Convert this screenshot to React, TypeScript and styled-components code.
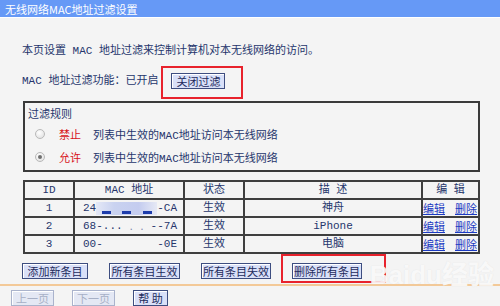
import React from "react";
import styled, { createGlobalStyle } from "styled-components";

const Global = createGlobalStyle`
  html, body { margin: 0; padding: 0; background: #f4f4f4; }
  body { font-family: "Liberation Mono", "Noto Sans CJK SC", monospace; font-size: 11px; color: #26366c; }
`;

const Page = styled.div`
  position: relative;
  width: 500px;
  height: 306px;
  overflow: hidden;
  background: #f4f4f4;
  display: flex;
  flex-direction: column;
`;

const Header = styled.div`
  height: 18px;
  background: #6699f6;
  border-bottom: 1px solid #ffffff;
  color: #ffffff;
  display: flex;
  align-items: center;
  padding-left: 5px;
  font-size: 11px;
  font-family: "Noto Sans CJK SC", sans-serif;
`;

const Content = styled.div`
  display: flex;
  flex-direction: column;
  padding: 25px 20px 0 22px;
`;

const Line = styled.div<{ $mt?: number }>`
  height: 16px;
  line-height: 16px;
  display: flex;
  align-items: center;
  margin-top: ${(p) => p.$mt ?? 0}px;
  white-space: nowrap;
`;

const Btn = styled.button<{ $w: number; $disabled?: boolean }>`
  position: relative;
  width: ${(p) => p.$w}px;
  height: 16px;
  padding: 0;
  font-family: "Noto Sans CJK SC", sans-serif;
  font-size: 11px;
  line-height: 14px;
  background: ${(p) => (p.$disabled ? "#e4e8f4" : "#d9e0f8")};
  color: ${(p) => (p.$disabled ? "#a7b0c6" : "#1e2b5c")};
  border: 1px solid ${(p) => (p.$disabled ? "#aab3cc" : "#3d4d80")};
  border-radius: 0;
  box-shadow: inset 1px 1px 0 #ffffff;
  cursor: default;
`;

const Mark = styled.div<{ $l: number; $t: number; $r: number; $b: number }>`
  position: absolute;
  left: ${(p) => p.$l}px;
  top: ${(p) => p.$t}px;
  right: ${(p) => p.$r}px;
  bottom: ${(p) => p.$b}px;
  border: 2px solid #e8222c;
  pointer-events: none;
`;

const Anchor = styled.span<{ $ml?: number }>`
  position: relative;
  display: inline-flex;
  margin-left: ${(p) => p.$ml ?? 0}px;
`;

const RuleBox = styled.fieldset`
  margin: 12px 0 0 1px;
  width: 457px;
  height: 71px;
  box-sizing: border-box;
  border: 2px solid #3a3a3a;
  padding: 4px 0 0 2px;
  display: flex;
  flex-direction: column;
`;

const RuleTitle = styled.div`
  height: 16px;
  line-height: 16px;
  margin-left: 1px;
`;

const RuleRow = styled.div<{ $mt: number }>`
  display: flex;
  align-items: center;
  height: 18px;
  margin-top: ${(p) => p.$mt}px;
  padding-left: 8px;
  white-space: nowrap;
`;

const Radio = styled.span<{ $checked?: boolean }>`
  width: 10px;
  height: 10px;
  box-sizing: border-box;
  border-radius: 50%;
  border: 1px solid #b9b9b9;
  background: radial-gradient(circle at 40% 35%, #ffffff, #dcdcdc);
  display: flex;
  align-items: center;
  justify-content: center;
  margin-right: 14px;
  &::after {
    content: "";
    display: ${(p) => (p.$checked ? "block" : "none")};
    width: 4px;
    height: 4px;
    border-radius: 50%;
    background: #6f6f6f;
  }
`;

const Red = styled.span`
  color: #d8121a;
  margin-right: 12px;
`;

const Table = styled.table`
  margin: 8px 0 0 1px;
  width: 457px;
  border-collapse: collapse;
  border: 2px solid #3a3a3a;
  table-layout: fixed;
`;

const Col = styled.col<{ $w?: number }>`
  width: ${(p) => (p.$w ? `${p.$w}px` : "auto")};
`;

const Th = styled.th`
  height: 16px;
  padding: 0;
  font-weight: normal;
  text-align: center;
  border: 2px solid #3f3f3f;
  line-height: 14px;
  white-space: nowrap;
`;

const Td = styled.td<{ $align?: string }>`
  height: 16px;
  padding: 0;
  text-align: ${(p) => p.$align ?? "center"};
  border: 2px solid #3f3f3f;
  line-height: 14px;
  white-space: nowrap;
  overflow: hidden;
`;

const MacCell = styled.div`
  display: flex;
  align-items: center;
  justify-content: space-between;
  padding: 0 6px 0 8px;
`;

const Blur = styled.span<{ $w: number; $solid?: boolean }>`
  position: relative;
  width: ${(p) => p.$w}px;
  height: 13px;
  background: ${(p) => (p.$solid ? "linear-gradient(90deg, #e4e8f6, #c9d2f0 30%, #c4ccef 70%, #e6e9f5)" : "transparent")};
  display: flex;
  align-items: flex-end;
  justify-content: space-around;
  color: #7883a8;
  font-size: 9px;
  line-height: 10px;
  overflow: hidden;
`;

const Dash = styled.span`
  width: 9px;
  height: 3px;
  background: #1d3cab;
  margin-bottom: 1px;
`;

const EditCell = styled.div`
  display: flex;
  justify-content: space-between;
  padding: 0 1px 0 0;
  font-family: "Noto Sans CJK SC", sans-serif;
`;

const Link = styled.a`
  color: #1c3bc2;
  text-decoration: underline;
`;

const BtnRow = styled.div<{ $gap: number; $mt: number; $pl?: number }>`
  display: flex;
  gap: ${(p) => p.$gap}px;
  margin-top: ${(p) => p.$mt}px;
  padding-left: ${(p) => p.$pl ?? 0}px;
`;

const Divider = styled.div`
  height: 2px;
  background: #f3c998;
  margin-top: 5px;
`;

const Watermark = styled.div`
  position: absolute;
  right: 6px;
  top: 254px;
  font-family: "Liberation Sans", "Noto Sans CJK SC", sans-serif;
  font-size: 26px;
  font-weight: bold;
  color: rgba(255, 255, 255, 0.8);
  text-shadow: 0 0 1px rgba(215, 215, 215, 0.7);
  pointer-events: none;
`;

const rows = [
  { id: "1", pre: "24", post: "-CA", desc: "神舟", blur: "solid" },
  { id: "2", pre: "68-...", post: "--7A", desc: "iPhone", blur: "dots" },
  { id: "3", pre: "00-", post: "-0E", desc: "电脑", blur: "none" },
];

export default function App() {
  return (
    <Page>
      <Global />
      <Header>无线网络MAC地址过滤设置</Header>
      <Content>
        <Line>本页设置 MAC 地址过滤来控制计算机对本无线网络的访问。</Line>
        <Line $mt={14}>
          MAC 地址过滤功能：已开启
          <Anchor $ml={13}>
            <Btn $w={54}>关闭过滤</Btn>
            <Mark $l={-10} $t={-7} $r={-18} $b={-10} />
          </Anchor>
        </Line>
        <RuleBox>
          <RuleTitle>过滤规则</RuleTitle>
          <RuleRow $mt={2}>
            <Radio />
            <Red>禁止</Red>列表中生效的MAC地址访问本无线网络
          </RuleRow>
          <RuleRow $mt={5}>
            <Radio $checked />
            <Red>允许</Red>列表中生效的MAC地址访问本无线网络
          </RuleRow>
        </RuleBox>
        <Table>
          <colgroup>
            <Col $w={50} />
            <Col $w={110} />
            <Col $w={60} />
            <Col />
            <Col $w={57} />
          </colgroup>
          <thead>
            <tr>
              <Th>ID</Th>
              <Th>MAC 地址</Th>
              <Th>状态</Th>
              <Th>描 述</Th>
              <Th>编 辑</Th>
            </tr>
          </thead>
          <tbody>
            {rows.map((r) => (
              <tr key={r.id}>
                <Td>{r.id}</Td>
                <Td $align="left">
                  <MacCell>
                    <span>{r.pre}</span>
                    {r.blur === "solid" ? (
                      <Blur $w={62} $solid>
                        <Dash />
                        <Dash />
                        <Dash />
                      </Blur>
                    ) : r.blur === "dots" ? (
                      <Blur $w={18}>. .</Blur>
                    ) : (
                      <Blur $w={50} />
                    )}
                    <span>{r.post}</span>
                  </MacCell>
                </Td>
                <Td>生效</Td>
                <Td>{r.desc}</Td>
                <Td $align="left">
                  <EditCell>
                    <Link>编辑</Link>
                    <Link>删除</Link>
                  </EditCell>
                </Td>
              </tr>
            ))}
          </tbody>
        </Table>
        <BtnRow $gap={21} $mt={9}>
          <Btn $w={66}>添加新条目</Btn>
          <Btn $w={71}>所有条目生效</Btn>
          <Btn $w={70}>所有条目失效</Btn>
          <Anchor>
            <Btn $w={70}>删除所有条目</Btn>
            <Mark $l={-11} $t={-9} $r={-24} $b={-4} />
          </Anchor>
        </BtnRow>
      </Content>
      <Divider />
      <BtnRow $gap={18} $mt={4} $pl={11}>
        <Btn $w={43} $disabled>上一页</Btn>
        <Btn $w={43} $disabled>下一页</Btn>
        <Btn $w={35}>帮 助</Btn>
      </BtnRow>
      <Watermark>Baidu经验</Watermark>
    </Page>
  );
}
